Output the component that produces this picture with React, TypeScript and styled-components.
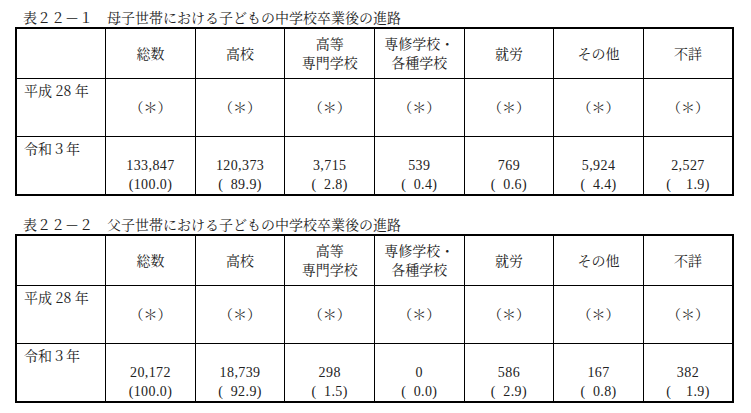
import React from "react";
import styled, { createGlobalStyle } from "styled-components";

const Global = createGlobalStyle`
  html, body { margin: 0; padding: 0; background: #fff; }
  body {
    font-family: "Noto Serif CJK JP", "Noto Sans CJK JP", sans-serif;
    color: #222;
  }
`;

const Page = styled.div`
  width: 751px;
  height: 413px;
  padding: 7px 0 0 15px;
  box-sizing: border-box;
`;

const Section = styled.section<{ $gap?: number }>`
  margin-top: ${(p) => p.$gap ?? 0}px;
`;

const Caption = styled.div`
  height: 20px;
  line-height: 20px;
  font-size: 14px;
  padding-left: 8px;
  white-space: pre;
`;

const Table = styled.table`
  border-collapse: collapse;
  table-layout: fixed;
  width: 719px;
  border: 2px solid #000;
`;

const HeadRow = styled.tr`
  height: 50px;
`;

const BodyRow = styled.tr<{ $h: number }>`
  height: ${(p) => p.$h}px;
`;

const HeadCell = styled.th`
  border: 1px solid #000;
  padding: 0;
  font-weight: 400;
  font-size: 14px;
  line-height: 19px;
  text-align: center;
  vertical-align: middle;
`;

const Label = styled.td`
  border: 1px solid #000;
  padding: 2px 0 0 7px;
  font-size: 14px;
  line-height: 19px;
  vertical-align: top;
  white-space: pre;
`;

const Star = styled.td`
  border: 1px solid #000;
  padding: 0 0 2px;
  font-size: 14px;
  line-height: 19px;
  text-align: center;
  vertical-align: middle;
`;

const Num = styled.td`
  border: 1px solid #000;
  padding: 0;
  font-family: "Liberation Serif", "Noto Sans CJK JP", serif;
  font-size: 14px;
  letter-spacing: 0.4px;
  line-height: 19px;
  text-align: center;
  vertical-align: bottom;
  white-space: pre;
`;

const Line = styled.div``;

const heads: string[][] = [
  ["総数"],
  ["高校"],
  ["高等", "専門学校"],
  ["専修学校・", "各種学校"],
  ["就労"],
  ["その他"],
  ["不詳"],
];

const F = "\u2007";

type Data = { title: string; values: string[]; pcts: string[] };

const tables: Data[] = [
  {
    title: "表２２－１　母子世帯における子どもの中学校卒業後の進路",
    values: ["133,847", "120,373", "3,715", "539", "769", "5,924", "2,527"],
    pcts: ["(100.0)", `(${F}89.9)`, `(${F}2.8)`, `(${F}0.4)`, `(${F}0.6)`, `(${F}4.4)`, `(${F}${F}1.9)`],
  },
  {
    title: "表２２－２　父子世帯における子どもの中学校卒業後の進路",
    values: ["20,172", "18,739", "298", "0", "586", "167", "382"],
    pcts: ["(100.0)", `(${F}92.9)`, `(${F}1.5)`, `(${F}0.0)`, `(${F}2.9)`, `(${F}0.8)`, `(${F}${F}1.9)`],
  },
];

function DataTable({ d }: { d: Data }) {
  return (
    <>
      <Caption>{d.title}</Caption>
      <Table>
        <colgroup>
          {Array.from({ length: 8 }).map((_, i) => (
            <col key={i} />
          ))}
        </colgroup>
        <tbody>
          <HeadRow>
            <HeadCell />
            {heads.map((h, i) => (
              <HeadCell key={i}>
                {h.map((l, j) => (
                  <Line key={j}>{l}</Line>
                ))}
              </HeadCell>
            ))}
          </HeadRow>
          <BodyRow $h={58}>
            <Label>平成 28 年</Label>
            {heads.map((_, i) => (
              <Star key={i}>（＊）</Star>
            ))}
          </BodyRow>
          <BodyRow $h={59}>
            <Label>令和３年</Label>
            {d.values.map((v, i) => (
              <Num key={i}>
                <Line>{v}</Line>
                <Line>{d.pcts[i]}</Line>
              </Num>
            ))}
          </BodyRow>
        </tbody>
      </Table>
    </>
  );
}

export default function App() {
  return (
    <Page>
      <Global />
      <Section>
        <DataTable d={tables[0]} />
      </Section>
      <Section $gap={18}>
        <DataTable d={tables[1]} />
      </Section>
    </Page>
  );
}
